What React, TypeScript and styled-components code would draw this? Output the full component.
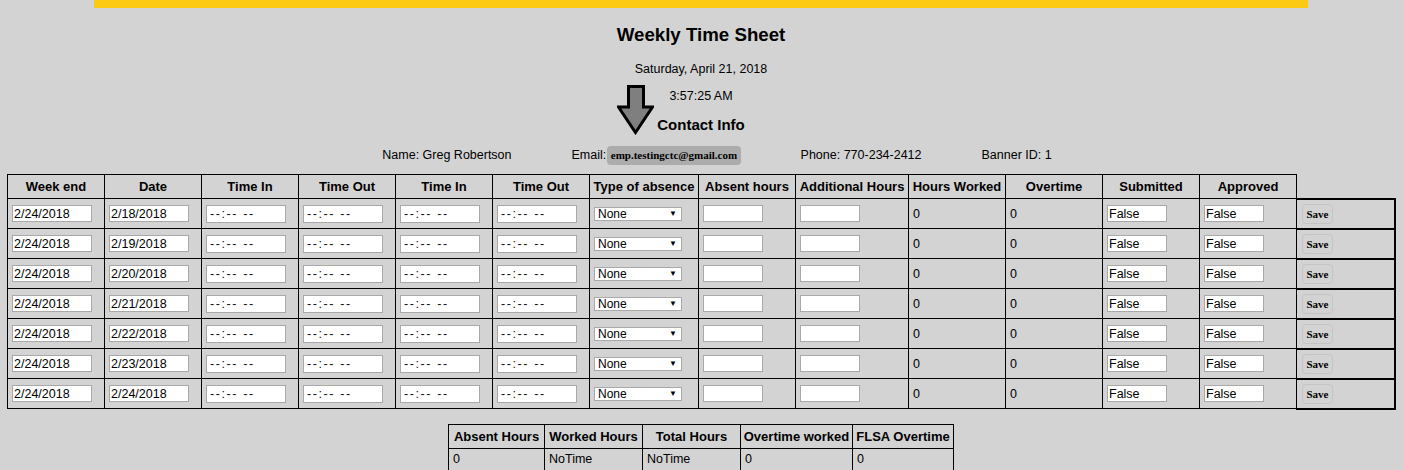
import React from 'react';
import styled, { createGlobalStyle } from 'styled-components';

const GlobalStyle = createGlobalStyle`
  html, body { margin: 0; padding: 0; background: #d3d3d3; }
  body { font-family: "Liberation Sans", Arial, sans-serif; color: #000; }
`;

const Page = styled.div`
  position: relative;
  padding: 0 8px 0 7px;
  min-height: 470px;
  overflow: hidden;
`;

const TopBar = styled.div`
  width: 1214px;
  height: 8px;
  margin: 0 auto;
  background: #fcca12;
`;

const Title = styled.h1`
  margin: 16px 0 0;
  font-size: 18.7px;
  line-height: 22px;
  font-weight: bold;
  text-align: center;
`;

const Line = styled.p<{ $top: number }>`
  margin: ${(p) => p.$top}px 0 0;
  font-size: 12.5px;
  line-height: 15px;
  text-align: center;
`;

const SectionHeading = styled.h2`
  margin: 12px 0 0;
  font-size: 15px;
  line-height: 18px;
  font-weight: bold;
  text-align: center;
`;

const InfoRow = styled.div`
  display: flex;
  justify-content: center;
  align-items: center;
  gap: 60px;
  padding-left: 32px;
  margin-top: 11px;
  height: 20px;
  font-size: 12.5px;
`;

const InfoItem = styled.span`
  display: inline-flex;
  align-items: center;
  white-space: nowrap;
`;

const EmailBadge = styled.span`
  display: inline-block;
  margin-left: 1px;
  padding: 0 3.5px;
  height: 19px;
  line-height: 19px;
  border-radius: 4px;
  background: #acacac;
  font-family: "Liberation Serif", "Times New Roman", serif;
  font-weight: bold;
  font-size: 11px;
`;

const ArrowMark = styled.svg`
  position: absolute;
  left: 617px;
  top: 85px;
  width: 37px;
  height: 50px;
`;

const Sheet = styled.table`
  border-collapse: collapse;
  table-layout: fixed;
  width: 1387px;
  margin-top: 9px;
  font-size: 12.5px;
`;

const Col = styled.col<{ $w: number }>`
  width: ${(p) => p.$w}px;
`;

const HeadCell = styled.th`
  border: 1px solid #000;
  height: 23px;
  padding: 0 2px;
  font-size: 13px;
  font-weight: bold;
  white-space: nowrap;
  text-align: center;
  vertical-align: middle;
`;

const Cell = styled.td`
  border: 1px solid #000;
  height: 29px;
  padding: 0 4px;
  text-align: left;
  vertical-align: middle;
  white-space: nowrap;
`;

const SaveCell = styled(Cell)`
  height: 27px;
  border-width: 2px 2px 2px 1px;
  padding-left: 5px;
`;

const TextInput = styled.input<{ $w: number }>`
  display: block;
  box-sizing: border-box;
  width: ${(p) => p.$w}px;
  height: 17px;
  margin: 0;
  padding: 0 1px;
  border: 1px solid #a9a9a9;
  background: #fff;
  font-family: "Liberation Sans", Arial, sans-serif;
  font-size: 12.5px;
  color: #000;
`;

const TimeInput = styled(TextInput)`
  height: 18px;
  padding: 0 3px;
  letter-spacing: 1.6px;
  color: #111;
`;

const SelectBox = styled.span`
  display: inline-flex;
  align-items: center;
  box-sizing: border-box;
  width: 88px;
  height: 14px;
  padding: 0 4px 0 3px;
  border: 1px solid #a9a9a9;
  background: #fff;
`;

const SelectField = styled.select`
  flex: 1;
  appearance: none;
  -webkit-appearance: none;
  border: none;
  background: transparent;
  padding: 0;
  margin: 0;
  height: 12px;
  line-height: 12px;
  font-family: "Liberation Sans", Arial, sans-serif;
  font-size: 12px;
  color: #000;
  outline: none;
`;

const SelectArrow = styled.span`
  font-size: 8px;
  line-height: 8px;
  color: #000;
`;

const SaveButton = styled.button`
  display: block;
  box-sizing: border-box;
  width: 31px;
  height: 20px;
  padding: 0;
  border: 1px solid #c4c4c4;
  border-radius: 4px;
  background: transparent;
  font-family: "Liberation Serif", "Times New Roman", serif;
  font-weight: bold;
  font-size: 11px;
  color: #000;
`;

const Summary = styled.table`
  border-collapse: collapse;
  table-layout: fixed;
  width: 505px;
  margin: 14px auto 0;
  font-size: 12.5px;
`;

const SummaryHead = styled(HeadCell)`
  height: 23px;
`;

const SummaryCell = styled(Cell)`
  height: 21px;
`;

const headers = [
  'Week end', 'Date', 'Time In', 'Time Out', 'Time In', 'Time Out', 'Type of absence',
  'Absent hours', 'Additional Hours', 'Hours Worked', 'Overtime', 'Submitted', 'Approved',
];
const widths = [97, 97, 97, 97, 97, 97, 109, 97, 113, 97, 97, 97, 97, 98];
const dates = ['2/18/2018', '2/19/2018', '2/20/2018', '2/21/2018', '2/22/2018', '2/23/2018', '2/24/2018'];

const summaryHeaders = ['Absent Hours', 'Worked Hours', 'Total Hours', 'Overtime worked', 'FLSA Overtime'];
const summaryWidths = [96, 98, 98, 112, 101];
const summaryValues = ['0', 'NoTime', 'NoTime', '0', '0'];

export default function App() {
  return (
    <Page>
      <GlobalStyle />
      <TopBar />
      <Title>Weekly Time Sheet</Title>
      <Line $top={16}>Saturday, April 21, 2018</Line>
      <Line $top={12}>3:57:25 AM</Line>
      <SectionHeading>Contact Info</SectionHeading>
      <ArrowMark viewBox="0 0 37 50">
        <path
          d="M11.5 1.5 H26.5 V22 H35.5 L18.5 47.5 L1.5 22 H11.5 Z"
          fill="#7f7f7f"
          stroke="#000"
          strokeWidth="3"
          strokeLinejoin="miter"
        />
      </ArrowMark>
      <InfoRow>
        <InfoItem>Name: Greg Robertson</InfoItem>
        <InfoItem>
          Email:<EmailBadge>emp.testingctc@gmail.com</EmailBadge>
        </InfoItem>
        <InfoItem>Phone: 770-234-2412</InfoItem>
        <InfoItem>Banner ID: 1</InfoItem>
      </InfoRow>

      <Sheet>
        <colgroup>
          {widths.map((w, i) => (
            <Col key={i} $w={w} />
          ))}
        </colgroup>
        <thead>
          <tr>
            {headers.map((h, i) => (
              <HeadCell key={i}>{h}</HeadCell>
            ))}
          </tr>
        </thead>
        <tbody>
          {dates.map((d) => (
            <tr key={d}>
              <Cell><TextInput $w={80} defaultValue="2/24/2018" /></Cell>
              <Cell><TextInput $w={80} defaultValue={d} /></Cell>
              <Cell><TimeInput $w={80} defaultValue="--:-- --" /></Cell>
              <Cell><TimeInput $w={80} defaultValue="--:-- --" /></Cell>
              <Cell><TimeInput $w={80} defaultValue="--:-- --" /></Cell>
              <Cell><TimeInput $w={80} defaultValue="--:-- --" /></Cell>
              <Cell>
                <SelectBox>
                  <SelectField defaultValue="None">
                    <option>None</option>
                  </SelectField>
                  <SelectArrow>▼</SelectArrow>
                </SelectBox>
              </Cell>
              <Cell><TextInput $w={60} defaultValue="" /></Cell>
              <Cell><TextInput $w={60} defaultValue="" /></Cell>
              <Cell>0</Cell>
              <Cell>0</Cell>
              <Cell><TextInput $w={60} defaultValue="False" /></Cell>
              <Cell><TextInput $w={60} defaultValue="False" /></Cell>
              <SaveCell><SaveButton>Save</SaveButton></SaveCell>
            </tr>
          ))}
        </tbody>
      </Sheet>

      <Summary>
        <colgroup>
          {summaryWidths.map((w, i) => (
            <Col key={i} $w={w} />
          ))}
        </colgroup>
        <thead>
          <tr>
            {summaryHeaders.map((h) => (
              <SummaryHead key={h}>{h}</SummaryHead>
            ))}
          </tr>
        </thead>
        <tbody>
          <tr>
            {summaryValues.map((v, i) => (
              <SummaryCell key={i}>{v}</SummaryCell>
            ))}
          </tr>
        </tbody>
      </Summary>
    </Page>
  );
}
